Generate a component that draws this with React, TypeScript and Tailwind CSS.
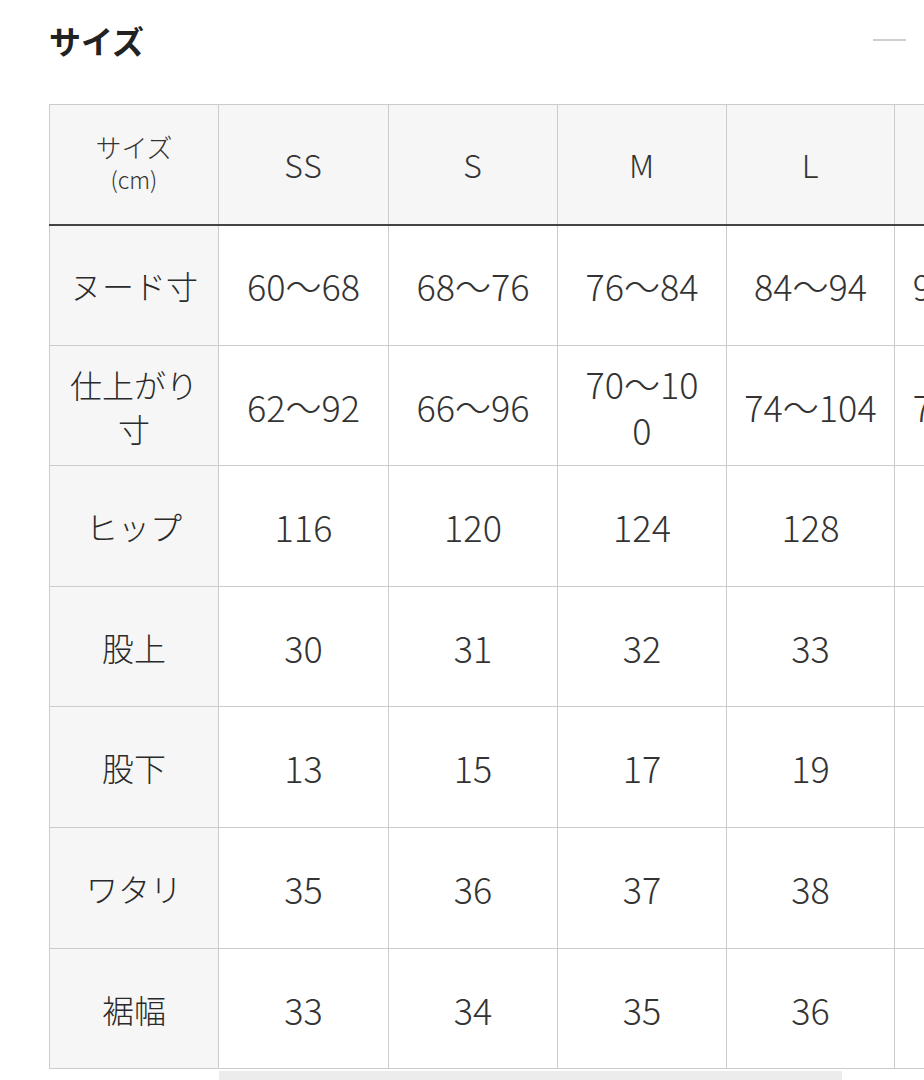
import React from "react";

const font = { fontFamily: '"Noto Sans CJK JP", "Noto Sans", sans-serif' };

const headers = ["SS", "S", "M", "L", "LL"];

const rows: { label: React.ReactNode; values: React.ReactNode[]; h: string }[] = [
  { label: "ヌード寸", values: ["60〜68", "68〜76", "76〜84", "84〜94", "94〜104"], h: "h-[121px]" },
  {
    label: (
      <>
        仕上がり
        <br />寸
      </>
    ),
    values: [
      "62〜92",
      "66〜96",
      (
        <>
          70〜10
          <br />0
        </>
      ),
      "74〜104",
      "78〜108",
    ],
    h: "h-[120px]",
  },
  { label: "ヒップ", values: ["116", "120", "124", "128", "132"], h: "h-[121px]" },
  { label: "股上", values: ["30", "31", "32", "33", "34"], h: "h-[120px]" },
  { label: "股下", values: ["13", "15", "17", "19", "21"], h: "h-[121px]" },
  { label: "ワタリ", values: ["35", "36", "37", "38", "39"], h: "h-[121px]" },
  { label: "裾幅", values: ["33", "34", "35", "36", "37"], h: "h-[120px]" },
];

const colW = ["w-[169px]", "w-[170px]", "w-[169px]", "w-[169px]", "w-[168px]", "w-[169px]"];

export default function App() {
  return (
    <div className="w-[924px] h-[1080px] bg-white overflow-hidden text-[#333]" style={font}>
      <div className="flex items-center justify-between pl-[49px] pr-[18px] h-[80px]">
        <h2 className="text-[32px] font-bold text-[#222] leading-none">サイズ</h2>
        <div className="w-[33px] h-[2px] bg-[#cfcfcf]" />
      </div>
      <div className="pl-[49px] pt-[24px]">
        <div className="overflow-hidden w-[875px]">
          <table className="border-collapse table-fixed w-[1014px] font-light">
            <colgroup>
              {colW.map((w, i) => (
                <col key={i} className={w} />
              ))}
            </colgroup>
            <thead>
              <tr className="h-[120px] bg-[#f6f6f6]">
                <th className="border border-[#cccccc] border-b-2 border-b-[#444] font-light text-center align-middle p-0 pb-[2px]">
                  <div className="text-[26px] leading-[32px]">サイズ</div>
                  <div className="text-[23px] leading-[32px]">(cm)</div>
                </th>
                {headers.map((h) => (
                  <th
                    key={h}
                    className="border border-[#cccccc] border-b-2 border-b-[#444] font-light text-center align-middle text-[32px] tracking-[1px] p-0"
                  >
                    {h}
                  </th>
                ))}
              </tr>
            </thead>
            <tbody>
              {rows.map((r, i) => (
                <tr key={i} className={r.h}>
                  <td className="border border-[#cccccc] bg-[#f6f6f6] text-center align-middle text-[32px] leading-[44px] p-0 text-[#2a2a2a]">
                    {r.label}
                  </td>
                  {r.values.map((v, j) => (
                    <td
                      key={j}
                      className="border border-[#cccccc] bg-white text-center align-middle text-[36px] leading-[46px] p-0 whitespace-nowrap"
                    >
                      {v}
                    </td>
                  ))}
                </tr>
              ))}
            </tbody>
          </table>
        </div>
        <div className="ml-[170px] mt-[2px] w-[623px] h-[10px] bg-[#ececec]" />
      </div>
    </div>
  );
}
